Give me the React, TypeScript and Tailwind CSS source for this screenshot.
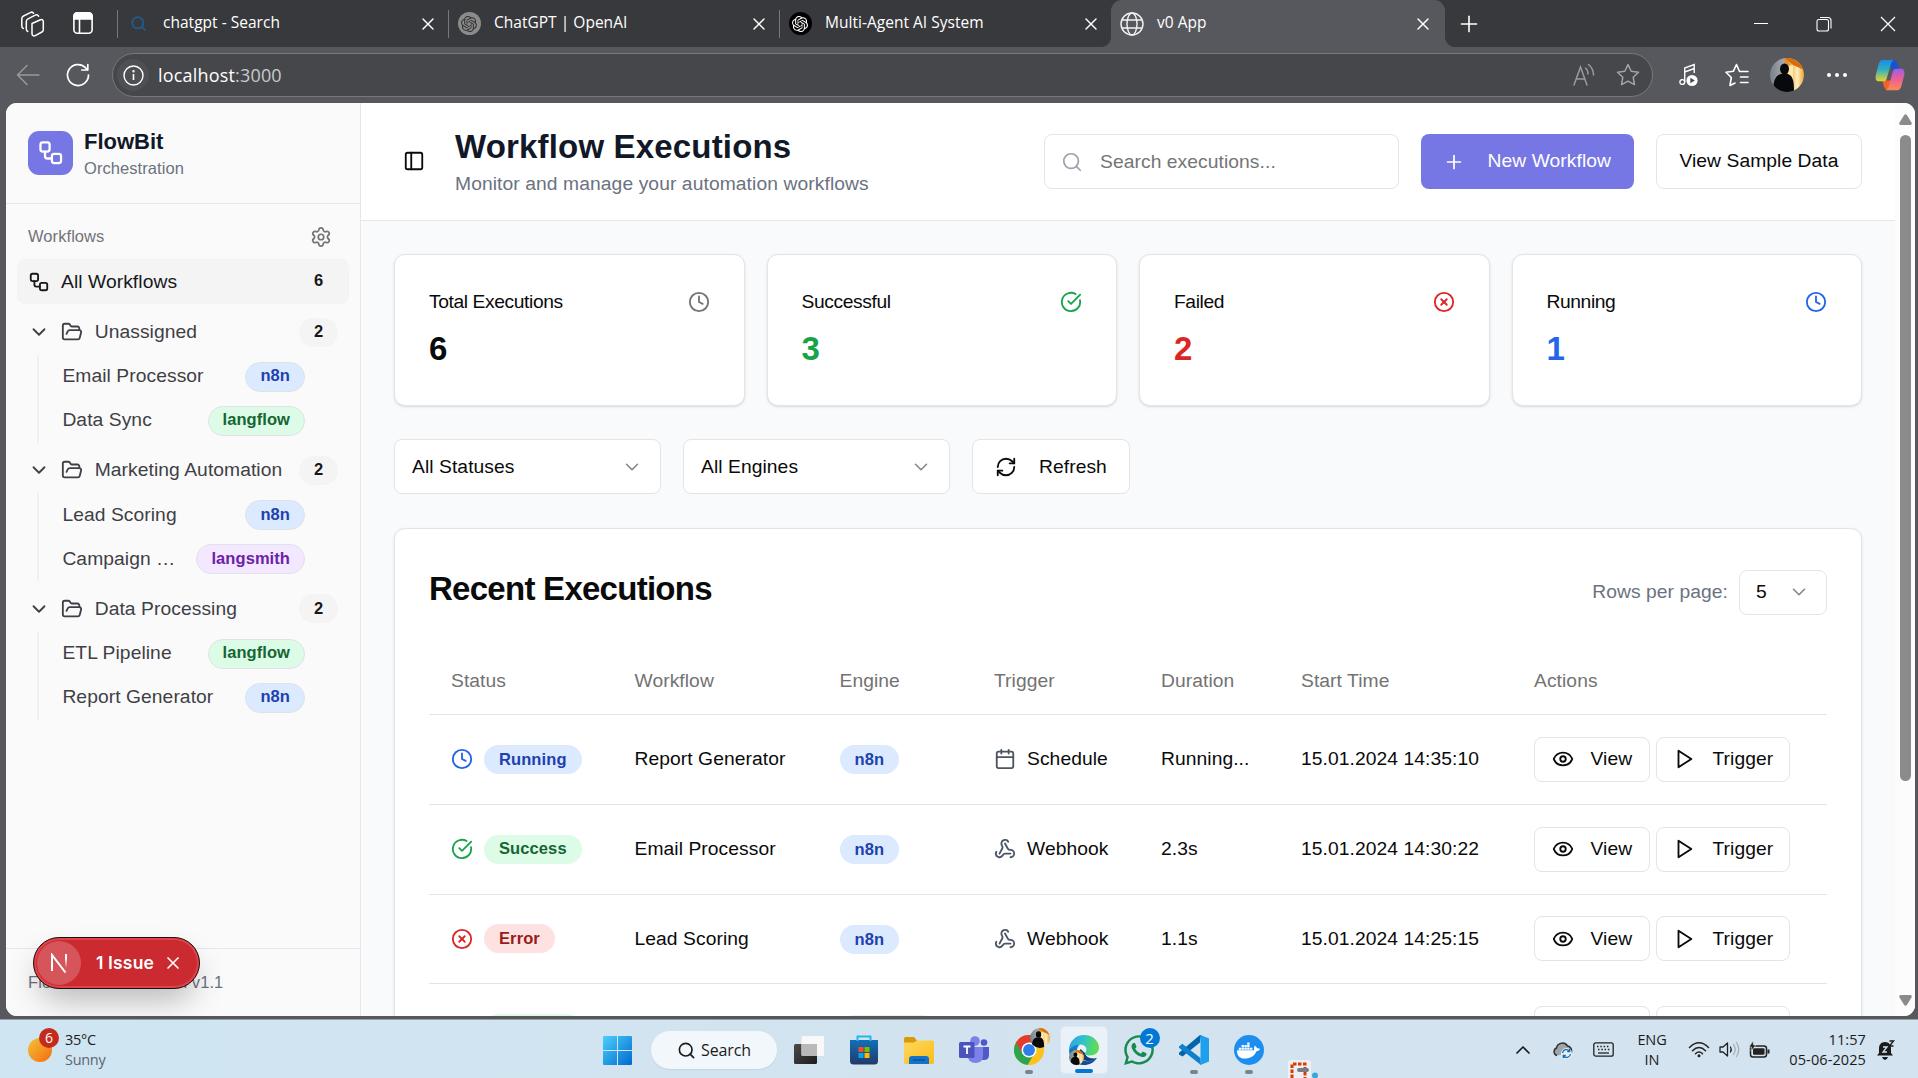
import React from "react";
import {
  Calendar, ChevronDown, ChevronUp, CircleCheckBig, CircleX, Clock, Eye, FolderOpen,
  PanelLeft, Plus, RefreshCw, Search, Settings, Webhook, Workflow, X,
} from "lucide-react";
import { SiOpenai } from "react-icons/si";
import { FaDocker, FaWhatsapp } from "react-icons/fa";

/* ---------- Browser chrome ---------- */

function Tab({ icon, label, active, divider }: { icon: React.ReactNode; label: string; active?: boolean; divider?: boolean }) {
  return (
    <div className={active ? "relative flex h-[47px] w-[334px] items-center rounded-t-[11px] bg-[#57585d] pl-[9px]" : "flex h-[47px] w-[331px] items-center pl-[8px]"}>
      {active && (
        <>
          <span className="absolute -left-[10px] bottom-0 h-[10px] w-[10px] bg-[radial-gradient(circle_at_0_0,#38393d_9.5px,#57585d_10.5px)]" />
          <span className="absolute -right-[10px] bottom-0 h-[10px] w-[10px] bg-[radial-gradient(circle_at_100%_0,#38393d_9.5px,#57585d_10.5px)]" />
        </>
      )}
      <span className="flex w-[24px] items-center justify-center">{icon}</span>
      <span className="whitespace-nowrap pb-[2px] pl-[13px] text-[15.500px] tracking-[0.02px] text-white">{label}</span>
      <X className={active ? "ml-auto mr-[12px] text-white" : "ml-auto mr-[10px] text-white"} size={20} strokeWidth={1.7} />
      {divider && <span className="h-[28px] w-px bg-[#77787c]" />}
    </div>
  );
}

function TitleBar() {
  return (
    <div className="flex h-[47px] items-center bg-[#38393d] font-['Open_Sans','Noto_Sans',sans-serif]">
      <div className="flex w-[117px] items-center pl-[20px]">
        <svg width="26" height="28" viewBox="0 0 26 28" fill="none" stroke="#fff" strokeWidth="1.5" strokeLinejoin="round" strokeLinecap="round">
          <path d="M12 13.500l8.500-3.700c1.500-.6 2.800.2 2.800 1.800v8.200c0 1-.5 1.700-1.400 2.200l-6.600 3.600c-1.700.9-3.300 0-3.300-1.800z" />
          <path d="M7.800 21.500c-.9-.4-1.500-1.200-1.500-2.400v-7.600c0-1.200.6-2.100 1.700-2.700l7.200-3.600c1.500-.8 3-.2 3.400 1" />
          <path d="M3.300 18.500c-.9-.4-1.500-1.200-1.500-2.400V8.700c0-1.200.6-2.100 1.700-2.700l6.800-3.400c1.300-.7 2.700-.3 3.300.7" />
        </svg>
        <svg className="mb-[2px] ml-[27px]" width="20" height="24" viewBox="0 0 20 24" fill="none" stroke="#fff" strokeWidth="1.600">
          <rect x=".9" y="1.900" width="18.200" height="20.400" rx="3.500" />
          <path d="M1 8V5q0-3 3-3h12q3 0 3 3v3z" fill="#fff" />
          <path d="M6.500 8v14" />
        </svg>
      </div>
      <span className="h-[28px] w-px bg-[#77787c]" />
      <Tab divider icon={<Search size={17} color="#1f5c8f" strokeWidth={2.500} />} label="chatgpt - Search" />
      <Tab divider icon={<span className="flex h-[23px] w-[23px] items-center justify-center rounded-full bg-[#8b8b8b]"><SiOpenai size={16} color="#333" /></span>} label="ChatGPT | OpenAI" />
      <Tab icon={<span className="flex h-[23px] w-[23px] items-center justify-center rounded-full bg-black"><SiOpenai size={16} color="#fff" /></span>} label="Multi-Agent AI System" />
      <Tab active icon={<svg width="24" height="24" viewBox="0 0 24 24" fill="none" stroke="#f2f2f2" strokeWidth="1.400"><circle cx="12" cy="12" r="11" /><ellipse cx="12" cy="12" rx="5" ry="11" /><path d="M2 8h20M2 16h20" /></svg>} label="v0 App" />
      <Plus className="ml-[11px] text-white" size={26} strokeWidth={1.500} />
      <div className="ml-auto flex items-center text-white">
        <span className="mr-[48px] h-px w-[14px] bg-white" />
        <svg className="mr-[48px]" width="16" height="16" viewBox="0 0 16 16" fill="none" stroke="#fff" strokeWidth="1.100">
          <rect x="1" y="3.500" width="11.500" height="11.500" rx="2" />
          <path d="M4 1.500h8q3 0 3 3v8" />
        </svg>
        <svg className="mr-[22px]" width="16" height="16" viewBox="0 0 16 16" stroke="#fff" strokeWidth="1.200"><path d="M1 1l14 14M15 1L1 15" /></svg>
      </div>
    </div>
  );
}

function Avatar({ size }: { size: number }) {
  return (
    <svg width={size} height={size} viewBox="0 0 34 34" className="shrink-0">
      <defs>
        <clipPath id={"av" + size}><circle cx="17" cy="17" r="17" /></clipPath>
        <linearGradient id={"ag" + size}><stop offset="0" stopColor="#77818b" /><stop offset=".4" stopColor="#a7a9a8" /><stop offset=".5" stopColor="#e68a1c" /><stop offset=".8" stopColor="#fff0c0" /><stop offset="1" stopColor="#f0a030" /></linearGradient>
      </defs>
      <g clipPath={"url(#av" + size + ")"}>
        <rect width="34" height="34" fill={"url(#ag" + size + ")"} />
        <path d="M15 0h19v12L23 7z" fill="#d96d0c" />
        <path d="M18 8l5-1v18h-5z" fill="#ffe9a8" />
        <ellipse cx="14.500" cy="11" rx="4.500" ry="5.500" fill="#07090d" />
        <path d="M3 34c0-12 3-17 8-18h7c5 2 6 7 6 18z" fill="#07090d" />
      </g>
    </svg>
  );
}

function Toolbar() {
  return (
    <div className="flex h-[56px] items-center bg-[#57585d] font-['Open_Sans','Noto_Sans',sans-serif]">
      <svg className="ml-[16px]" width="24" height="22" viewBox="0 0 24 22" fill="none" stroke="#98999c" strokeWidth="1.500" strokeLinecap="round" strokeLinejoin="round"><path d="M23 11H1.500M11 1.500L1.500 11l9.500 9.500" /></svg>
      <svg className="ml-[26px]" width="24" height="24" viewBox="0 0 24 24" fill="none" stroke="#fff" strokeWidth="1.700" strokeLinecap="round" strokeLinejoin="round"><path d="M22.500 12A10.500 10.500 0 1 1 19.500 4.700L21.500 7M21.800 1.500V7h-6" /></svg>
      <div className="ml-[22px] flex h-[44px] w-[1541px] items-center rounded-full border border-[#77787c] bg-[#46474b] pl-[4px]">
        <span className="flex h-[32px] w-[32px] items-center justify-center rounded-full bg-[#4f5054]">
          <svg width="21" height="21" viewBox="0 0 21 21" fill="none" stroke="#fff" strokeWidth="1.400"><circle cx="10.500" cy="10.500" r="9.500" /><path d="M10.500 9v6" strokeWidth="1.600" /><circle cx="10.500" cy="6.300" r=".5" /></svg>
        </span>
        <span className="pl-[9px] text-[18px] tracking-[0.18px] text-white">localhost<span className="text-[#c9cacc]">:3000</span></span>
        <svg className="ml-auto" width="22" height="24" viewBox="0 0 22 24" fill="none" stroke="#9a9b9e" strokeWidth="1.500" strokeLinecap="round"><path d="M1 22L7.500 4 14 22M3.500 16h8" /><path d="M12.500 5q2.500 2 2.500 6M15.500 1.500q5 4 5 10.500" /></svg>
        <svg className="ml-[21px] mr-[12px]" width="24" height="24" viewBox="0 0 24 24" fill="none" stroke="#a3a4a7" strokeWidth="1.500" strokeLinejoin="round"><path d="M12 1.500l3.200 6.700 7.300 1-5.300 5.100 1.300 7.300-6.500-3.500-6.500 3.500 1.300-7.300L1.500 9.200l7.300-1z" /></svg>
      </div>
      <svg className="ml-[26px]" width="19" height="24" viewBox="0 0 19 24" fill="none" stroke="#fff" strokeWidth="1.400"><circle cx="3.300" cy="19" r="2.400" /><path d="M5.700 19V5l9.500-3.500V10M5.700 9l9.500-3.500" /><circle cx="13" cy="17.500" r="5.600" fill="#fff" stroke="none" /><path d="M11.300 14.700l4.500 2.800-4.500 2.800z" fill="#46474b" stroke="none" /></svg>
      <svg className="ml-[27px]" width="24" height="26" viewBox="0 0 24 26" fill="none" stroke="#fff" strokeWidth="1.600" strokeLinejoin="round" strokeLinecap="round"><path d="M14.500 9.500l-3-7-3.200 6.800-7.300 1 5.300 5.200-1.300 8 5-2.500M14.500 9.500H23M15.500 15H23M15.500 20.500H23" /></svg>
      <span className="ml-[21px]"><Avatar size={34} /></span>
      <span className="ml-[23px] flex gap-[4px]">
        <i className="h-[4px] w-[4px] rounded-full bg-white" /><i className="h-[4px] w-[4px] rounded-full bg-white" /><i className="h-[4px] w-[4px] rounded-full bg-white" />
      </span>
      <svg className="ml-[27px]" width="32" height="36" viewBox="0 0 32 31" preserveAspectRatio="none">
        <defs>
          <linearGradient id="c1" x1="0" y1="0" x2="0" y2="1"><stop offset="0" stopColor="#1a8bea" /><stop offset=".45" stopColor="#2fb0c0" /><stop offset="1" stopColor="#ecd32c" /></linearGradient>
          <linearGradient id="c2" x1="0" y1="0" x2="0" y2="1"><stop offset="0" stopColor="#9a5cf0" /><stop offset=".5" stopColor="#ef5f93" /><stop offset="1" stopColor="#f98c50" /></linearGradient>
        </defs>
        <g transform="translate(1 2.500) scale(.94 .84)">
          <path d="M14 0h6c2 0 3 1 4 4l2 6h-8z" fill="#1a51ce" />
          <path d="M8 22l5-1h6l-3 8c-1 2-2 2-4 1.500-2-.5-3-4-4-8.500z" fill="#f0612c" />
          <path d="M8.500 0H20c-2 1-3 3-4 7l-3.500 12C12 21 11 22 9 22H4c-3 0-4-3-3-7L4 4c.8-2.500 2-4 4.500-4z" fill="url(#c1)" />
          <path d="M23.500 31H11.500c2-1 3-3 4-7L19 12c.6-2 1.500-3 3.500-3H28c3 0 4 3 3 7l-3 11c-.8 2.500-2 4-4.500 4z" fill="url(#c2)" />
        </g>
      </svg>
    </div>
  );
}

/* ---------- Sidebar ---------- */

type Engine = "n8n" | "langflow" | "langsmith";
const engineTone: Record<Engine, string> = {
  n8n: "bg-[#dbeafe] text-[#1e40af]",
  langflow: "bg-[#dcfce7] text-[#166534]",
  langsmith: "bg-[#f3e8ff] text-[#6b21a8]",
};

const groups: { name: string; items: { name: string; engine: Engine }[] }[] = [
  { name: "Unassigned", items: [{ name: "Email Processor", engine: "n8n" }, { name: "Data Sync", engine: "langflow" }] },
  { name: "Marketing Automation", items: [{ name: "Lead Scoring", engine: "n8n" }, { name: "Campaign …", engine: "langsmith" }] },
  { name: "Data Processing", items: [{ name: "ETL Pipeline", engine: "langflow" }, { name: "Report Generator", engine: "n8n" }] },
];

function Count({ n }: { n: number }) {
  return <span className="ml-auto flex h-[29px] w-[39px] items-center justify-center rounded-full bg-[#f4f4f5] pb-[2px] text-[16.500px] font-bold text-[#171717]">{n}</span>;
}

function Sidebar() {
  return (
    <aside className="relative flex w-[355px] shrink-0 flex-col border-r border-[#e5e7eb] bg-[#fafafa]">
      <div className="flex h-[101px] shrink-0 items-center gap-[11px] border-b border-[#e5e7eb] pl-[22px]">
        <span className="flex h-[44px] w-[45px] items-center justify-center rounded-[11px] bg-[#7676e4] text-white"><Workflow size={27.500} /></span>
        <div>
          <div className="text-[22px] font-bold leading-[30px] text-[#111827]">FlowBit</div>
          <div className="text-[16.500px] leading-[22px] tracking-[0.07px] text-[#6b7280]">Orchestration</div>
        </div>
      </div>
      <div className="flex flex-1 flex-col pl-[11px] pr-[11px] pt-[10px] tracking-[0.07px]">
        <div className="flex h-[45px] items-center justify-between pl-[11px] pr-[17px] text-[16.500px] text-[#737378]">
          Workflows
          <Settings size={22} strokeWidth={1.900} />
        </div>
        <div className="mb-[6px] flex h-[45px] items-center rounded-[8px] bg-[#f4f4f5] pl-[11px] pr-[11px] text-[19.250px] text-[#18181b]">
          <Workflow size={22} className="mr-[11px]" />
          <span className="pt-px">All Workflows</span>
          <Count n={6} />
        </div>
        {groups.map((g) => (
          <div key={g.name} className="mb-[5.8px]">
            <div className="flex h-[44px] items-center pl-[11px] pr-[11px] text-[19.250px] text-[#3f3f46]">
              <ChevronDown size={22} className="mr-[11px]" />
              <FolderOpen size={22} className="mr-[11.7px]" />
              {g.name}
              <Count n={2} />
            </div>
            <div className="ml-[20px] mt-[0.7px] border-l-2 border-[#f0f0f1]">
              {g.items.map((it) => (
                <div key={it.name} className="flex h-[44px] items-center justify-between pl-[23.4px] pr-[44px] text-[19.250px] text-[#3f3f46]">
                  {it.name}
                  <span className={"flex h-[30px] items-center rounded-full border border-[#e0e2e6] px-[14px] pb-[2px] text-[16.500px] font-bold " + engineTone[it.engine]}>{it.engine}</span>
                </div>
              ))}
            </div>
          </div>
        ))}
      </div>
      <div className="h-[68px] shrink-0 border-t border-[#e5e7eb] pl-[22px] pt-[22px] text-[16.500px] leading-[22px] tracking-[0.07px] text-[#6b7280]">FlowBit Orchestration v1.1</div>
      <div className="absolute bottom-[27px] left-[27px] flex h-[52px] w-[167px] items-center rounded-full border border-[#1d1010] bg-[#ca2a30] pl-[3px] text-white shadow-[inset_0_0_0_2px_#e0444a,0_16px_32px_-6px_rgba(0,0,0,0.28)]">
        <span className="flex h-[44px] w-[44px] items-center justify-center rounded-full bg-[#d6555a]">
          <svg width="18" height="20" viewBox="0 0 18 20" fill="none" strokeWidth="2">
            <defs><linearGradient id="nx" x1="0" y1="0" x2="0" y2="1"><stop offset=".3" stopColor="#fff" /><stop offset="1" stopColor="#fff" stopOpacity="0" /></linearGradient></defs>
            <path d="M2 18V2l13.500 17.500" stroke="#fff" />
            <path d="M15 1h2v14h-2z" fill="url(#nx)" />
          </svg>
        </span>
        <span className="pl-[15px] font-['Inter'] text-[17.500px] font-semibold tracking-[0.15px]">1 Issue</span>
        <X size={20} strokeWidth={2} className="ml-[9px]" />
      </div>
    </aside>
  );
}

/* ---------- Main area ---------- */

const outline = "flex items-center rounded-[8px] border border-[#e4e4e7] bg-white text-[19.250px] text-[#0a0a0a] ";

function Header() {
  return (
    <header className="flex h-[118px] shrink-0 items-center border-b border-[#e5e7eb] bg-white">
      <PanelLeft size={22} className="mb-px ml-[42px] text-[#0a0a0a]" />
      <div className="ml-[30px]">
        <h1 className="text-[33px] font-bold leading-[44px] tracking-[0.17px] text-[#111827]">Workflow Executions</h1>
        <p className="text-[19.250px] leading-[29px] tracking-[0.09px] text-[#6b7280]">Monitor and manage your automation workflows</p>
      </div>
      <div className="ml-auto mr-[33px] flex gap-[22px]">
        <div className={outline + "w-[355px] pl-[16px]"}>
          <Search size={22} strokeWidth={1.900} className="mr-[17px] text-[#9ca3af]" />
          <span className="pt-px tracking-[0.07px] text-[#757575]">Search executions...</span>
        </div>
        <div className="flex h-[55px] w-[213px] items-center rounded-[8px] bg-[#7676e4] pl-[22px] text-[19.250px] tracking-[0.07px] text-white">
          <Plus size={22} strokeWidth={1.900} className="mr-[22.5px]" />New Workflow
        </div>
        <div className={outline + "w-[206px] justify-center tracking-[0.07px]"}>View Sample Data</div>
      </div>
    </header>
  );
}

const stats = [
  { label: "Total Executions", value: 6, tone: "text-[#0a0a0a]", iconTone: "text-[#737373]", Icon: Clock },
  { label: "Successful", value: 3, tone: "text-[#16a34a]", iconTone: "text-[#16a34a]", Icon: CircleCheckBig },
  { label: "Failed", value: 2, tone: "text-[#dc2626]", iconTone: "text-[#dc2626]", Icon: CircleX },
  { label: "Running", value: 1, tone: "text-[#2563eb]", iconTone: "text-[#2563eb]", Icon: Clock },
];

const rows: { status: "Running" | "Success" | "Error"; workflow: string; engine: Engine; trigger: string; duration: string; start: string }[] = [
  { status: "Running", workflow: "Report Generator", engine: "n8n", trigger: "Schedule", duration: "Running...", start: "15.01.2024 14:35:10" },
  { status: "Success", workflow: "Email Processor", engine: "n8n", trigger: "Webhook", duration: "2.3s", start: "15.01.2024 14:30:22" },
  { status: "Error", workflow: "Lead Scoring", engine: "n8n", trigger: "Webhook", duration: "1.1s", start: "15.01.2024 14:25:15" },
  { status: "Success", workflow: "", engine: "langflow", trigger: "", duration: "", start: "" },
];

const statusTone = {
  Running: { badge: "bg-[#dbeafe] text-[#1e40af]", icon: "text-[#2563eb]", Icon: Clock },
  Success: { badge: "bg-[#dcfce7] text-[#166534]", icon: "text-[#16a34a]", Icon: CircleCheckBig },
  Error: { badge: "bg-[#fee2e2] text-[#991b1b]", icon: "text-[#dc2626]", Icon: CircleX },
};

const cols = "grid grid-cols-[183.500px_205px_154.500px_167px_140px_233px_315px] items-center pl-[22px] ";
const badge = "flex h-[29px] items-center rounded-full px-[15px] pb-[1px] text-[16.500px] font-bold tracking-[0.1px] ";

function Executions() {
  return (
    <section className="h-[560px] shrink-0 rounded-[11px] border border-[#e4e4e7] bg-white px-[34px] text-[19.250px] tracking-[0.07px] text-[#0a0a0a] shadow-sm">
      <div className="flex h-[118px] items-center justify-between pt-[8px]">
        <h2 className="pb-[7px] text-[33px] font-bold tracking-[-0.73px]">Recent Executions</h2>
        <div className="flex items-center gap-[11px] text-[#6b7280]">
          <span className="pt-px">Rows per page:</span>
          <div className={outline + "h-[45px] w-[88px] justify-between pl-[16px] pr-[16px]"}><span className="pt-px">5</span><ChevronDown size={22} strokeWidth={1.700} className="text-[#858585]" /></div>
        </div>
      </div>
      <div className={cols + "h-[68px] border-b border-[#e4e4e7] pt-px text-[#737373]"}>
        <span>Status</span><span>Workflow</span><span>Engine</span><span>Trigger</span><span>Duration</span><span>Start Time</span><span>Actions</span>
      </div>
      {rows.map((r, i) => {
        const s = statusTone[r.status];
        return (
          <div key={i} className={cols + "h-[89.8px] border-b border-[#e4e4e7]"}>
            <span className="flex items-center gap-[11px]">
              <s.Icon size={22} className={s.icon} />
              <span className={badge + s.badge}>{r.status}</span>
            </span>
            <span className="pt-px">{r.workflow}</span>
            <span className="flex pt-px"><span className={badge + engineTone[r.engine]}>{r.engine}</span></span>
            <span className="flex items-center gap-[11px]">
              {r.trigger === "Schedule" ? <Calendar size={22} className="text-[#4b5563]" /> : <Webhook size={22} className="text-[#4b5563]" />}
              <span className="pt-px">{r.trigger}</span>
            </span>
            <span className="pt-px">{r.duration}</span>
            <span className="pt-px">{r.start}</span>
            <span className="flex gap-[6px]">
              <span className={outline + "h-[45px] w-[116px] pl-[17px]"}><Eye size={22} className="mr-[16.5px]" />View</span>
              <span className={outline + "h-[45px] w-[134px] pl-[16px]"}>
                <svg width="22" height="22" viewBox="0 0 24 24" fill="none" stroke="currentColor" strokeWidth="2" strokeLinecap="round" strokeLinejoin="round" className="mr-[17.5px]"><polygon points="6 3 20 12 6 21 6 3" /></svg>
                Trigger
              </span>
            </span>
          </div>
        );
      })}
    </section>
  );
}

function Main() {
  return (
    <main className="flex min-w-0 flex-1 flex-col bg-[#f9fafb]">
      <Header />
      <div className="flex flex-col px-[33px] pt-[33px]">
        <div className="grid shrink-0 grid-cols-4 gap-[22px]">
          {stats.map(({ label, value, tone, iconTone, Icon }) => (
            <div key={label} className="h-[152px] rounded-[11px] border border-[#e4e4e7] bg-white px-[34px] pt-[33px] shadow-sm">
              <div className="flex h-[27px] items-center justify-between text-[19.250px] tracking-[-0.4px] text-[#0a0a0a]">
                <span className="pt-px">{label}</span><Icon size={22} className={iconTone} />
              </div>
              <div className={"mt-[12px] text-[33px] font-bold leading-[44px] " + tone}>{value}</div>
            </div>
          ))}
        </div>
        <div className="mb-[34px] mt-[33px] flex h-[55px] shrink-0 gap-[22px] tracking-[0.07px]">
          <div className={outline + "w-[267px] justify-between pl-[17px] pr-[17px]"}><span className="pt-[2px]">All Statuses</span><ChevronDown size={22} strokeWidth={1.700} className="text-[#858585]" /></div>
          <div className={outline + "w-[267px] justify-between pl-[17px] pr-[17px]"}><span className="pt-[2px]">All Engines</span><ChevronDown size={22} strokeWidth={1.700} className="text-[#858585]" /></div>
          <div className={outline + "w-[158px] pl-[22px]"}><RefreshCw size={22} className="mr-[22px]" /><span className="pt-[2px]">Refresh</span></div>
        </div>
        <Executions />
      </div>
    </main>
  );
}

/* ---------- Taskbar ---------- */

function AppCell({ children, dot, active }: { children?: React.ReactNode; dot?: boolean; active?: boolean }) {
  return (
    <div className="flex w-[55px] justify-center">
      <div className={active ? "relative flex h-[48px] w-[48px] items-center justify-center rounded-[5px] border border-[#dfe6ee] bg-[#eaf1f8]" : "relative flex h-[48px] w-[48px] items-center justify-center"}>
        {children}
        {dot && <span className="absolute bottom-0 h-[4px] w-[8px] rounded-full bg-[#7c848b]" />}
        {active && <span className="absolute bottom-0 h-[4px] w-[18px] rounded-full bg-[#0078d4]" />}
      </div>
    </div>
  );
}

function Taskbar() {
  return (
    <div className="flex h-[58px] items-center overflow-hidden bg-linear-to-r from-[#cfe5f2] from-0% via-[#d3e3ef] via-60% to-[#d3e3ef] pt-[2px] font-['Open_Sans','Noto_Sans',sans-serif] text-[#1b1b1b]">
      <div className="flex w-[590px] items-center pl-[28px]">
        <div className="relative mb-[9px] h-[34px] w-[31px]">
          <span className="absolute bottom-[1px] left-0 h-[24px] w-[24px] rounded-full bg-linear-to-br from-[#eec435] to-[#f4660c]" />
          <span className="absolute -top-px left-[11px] flex h-[20px] w-[20px] items-center justify-center rounded-full bg-[#c42b1c] text-[14px] text-white">6</span>
        </div>
        <div className="ml-[6px] pb-px text-[14.500px] leading-[20px] tracking-[-0.3px]">
          <div>35°C</div>
          <div className="text-[#5d666d]">Sunny</div>
        </div>
      </div>
      <AppCell>
        <svg width="29" height="29" viewBox="0 0 29 29"><defs><linearGradient id="w" x1="0" y1="0" x2="1" y2="1"><stop offset="0" stopColor="#4cd0fb" /><stop offset="1" stopColor="#0069cf" /></linearGradient></defs><path fill="url(#w)" d="M1 0h13v14H0V1q0-1 1-1zM15 0h13q1 0 1 1v13H15zM0 15h14v14H1q-1 0-1-1zM15 15h14v13q0 1-1 1H15z" /></svg>
      </AppCell>
      <div className="ml-[6px] mr-[4px] flex h-[38px] w-[126px] items-center rounded-full bg-[#f2f7fc] pl-[26px] text-[16px] tracking-[-0.1px] shadow-[0_1px_1px_#c4d3df]">
        <Search size={19} strokeWidth={2.100} className="mr-[5px]" />Search
      </div>
      <AppCell>
        <svg width="30" height="29" viewBox="0 0 30 29"><defs><linearGradient id="tv" x1="0" y1="0" x2="1" y2="1"><stop offset="0" stopColor="#4a4a4a" /><stop offset="1" stopColor="#1d1d1d" /></linearGradient></defs><rect y="8" width="23" height="20" rx="1.500" fill="url(#tv)" /><rect x="7.500" y="0" width="22.500" height="20" rx="1.500" fill="#f8f8f8" /><path d="M7.500 8H23v12H9q-1.500 0-1.500-1.500z" fill="#b9b9b9" /></svg>
      </AppCell>
      <AppCell>
        <svg width="30" height="30" viewBox="0 0 30 30"><defs><linearGradient id="st" x1="0" y1="0" x2="0" y2="1"><stop offset="0" stopColor="#116fb9" /><stop offset="1" stopColor="#223a68" /></linearGradient></defs><path d="M1 5h28v21q0 3.500-3.500 3.500h-21Q1 29.500 1 26z" fill="url(#st)" /><path d="M8.500 6V1.500h13V6" fill="none" stroke="#22b5ef" strokeWidth="2" /><path d="M9.500 12h5v5h-5z" fill="#f25022" /><path d="M15.500 12h5v5h-5z" fill="#7fba00" /><path d="M9.500 18h5v5h-5z" fill="#00a4ef" /><path d="M15.500 18h5v5h-5z" fill="#ffb900" /></svg>
      </AppCell>
      <AppCell>
        <svg width="30" height="27" viewBox="0 0 30 27"><defs><linearGradient id="fo" x1="0" y1="0" x2="1" y2="1"><stop offset="0" stopColor="#ffd75e" /><stop offset="1" stopColor="#fabd18" /></linearGradient></defs><path d="M0 1.500Q0 0 1.500 0H10l3 3.500V8H0z" fill="#d99a08" /><path d="M0 5.500h10l3-2h15.500q1.500 0 1.500 1.500v20.500q0 1.500-1.500 1.500h-27Q0 27 0 25.500z" fill="url(#fo)" /><path d="M5 27v-5q0-3 3-3h14q3 0 3 3v5z" fill="#1473c8" /><path d="M9 23h12" stroke="#0b4a8a" strokeWidth="1.200" /></svg>
      </AppCell>
      <AppCell>
        <svg width="30" height="28" viewBox="0 0 30 28"><circle cx="25" cy="6.500" r="3.300" fill="#5059c9" /><path d="M20 11h10v8q0 5-5 5h-5z" fill="#5059c9" /><circle cx="16" cy="5" r="4.800" fill="#7b83eb" /><path d="M9 11h15v9q0 7-7.500 7Q9 27 9 20z" fill="#7b83eb" /><rect y="6" width="15.500" height="16" rx="1.500" fill="#4b53bc" /><path d="M4.500 10.500h7M8 10.500V18" stroke="#fff" strokeWidth="1.800" /></svg>
      </AppCell>
      <AppCell dot>
        <svg width="30" height="30" viewBox="0 0 48 48"><circle cx="24" cy="24" r="24" fill="#fbbc05" /><path d="M24 24L3.200 12A24 24 0 0 0 22 48l10-18z" fill="#2da44e" /><path d="M24 13h20.800A24 24 0 0 1 22 48l12-19z" fill="#fcc31e" /><path d="M3.200 12A24 24 0 0 1 44.800 12H24L12 27z" fill="#e33b2e" /><circle cx="24" cy="24" r="12" fill="#fff" /><circle cx="24" cy="24" r="9.500" fill="#2f7de9" /></svg>
        <span className="absolute right-[3px] top-[2px]"><Avatar size={20} /></span>
      </AppCell>
      <AppCell active>
        <svg width="30" height="30" viewBox="0 0 30 30">
          <defs>
            <linearGradient id="e1" x1="0" y1="0" x2="1" y2=".2"><stop offset="0" stopColor="#2a9fe6" /><stop offset=".5" stopColor="#30c2cb" /><stop offset="1" stopColor="#5fdc54" /></linearGradient>
            <linearGradient id="e2" x1="0" y1="0" x2="0" y2="1"><stop offset="0" stopColor="#1787d8" /><stop offset="1" stopColor="#114a8b" /></linearGradient>
          </defs>
          <path d="M0 15C.3 6 7 0 15 0c9 0 15 6.500 15 12.500 0 5-4 8-9 8-4 0-5.500-1.500-4.500-3 2.500-4-.5-8-5-8C6 9.500 2 12 0 15z" fill="url(#e1)" />
          <path d="M0 15c2-3.500 6-5.500 11-5.500C6 13 7 22 13 25c5 2.300 10 .8 15-2-3 4.500-7.500 7-13 7C6.500 30 0 23 0 15z" fill="url(#e2)" />
          <path d="M11.500 14c-4 5 0 11.500 7 12 4 .2 7.500-1.500 9.500-3-4 1-11 .5-12-5z" fill="#123f7a" />
        </svg>
        <span className="absolute bottom-[8px] left-[8px]"><Avatar size={15} /></span>
      </AppCell>
      <AppCell>
        <FaWhatsapp size={34} color="#178a4d" />
        <span className="absolute right-[3px] top-[2px] flex h-[20px] w-[20px] items-center justify-center rounded-full bg-[#0078d4] text-[15px] text-white">2</span>
      </AppCell>
      <AppCell dot>
        <svg width="30" height="30" viewBox="0 0 30 30"><path d="M22 0l-1 7.500L3.500 21.500 0 19.500v-1.800L21 0z" fill="#0065a9" /><path d="M0 11.500L3.300 8.800 21.500 23 22 30 0 12.800z" fill="#0f80cc" /><path d="M21.500 0L30 3.500v23L21.500 30z" fill="#1fa0ec" /></svg>
      </AppCell>
      <AppCell dot>
        <span className="flex h-[30px] w-[30px] items-center justify-center rounded-full bg-[#1d8df0]"><FaDocker size={23} color="#fff" /></span>
      </AppCell>
      <div className="ml-[12px] mt-[38px]">
        <svg width="32" height="18" viewBox="0 0 32 18"><path d="M0 18V3q0-3 3-3h17q3 0 3 3v15z" fill="#edf1f3" /><path d="M4 18V4h13v14" fill="none" stroke="#d83b01" strokeWidth="3" strokeDasharray="3.500 1.500" /><rect x="9" y="8" width="12" height="4" rx="2" fill="#777d82" /><circle cx="27" cy="15.500" r="3" fill="#3aa6e0" /></svg>
      </div>
      <div className="ml-auto flex items-center pb-px">
        <ChevronUp size={24} strokeWidth={1.700} className="mr-[17px]" />
        <svg width="21" height="18" viewBox="0 0 21 18"><path d="M5 14.500A4 4 0 0 1 4.500 7 6 6 0 0 1 15.500 5 4.500 4.500 0 0 1 19.500 10v2" fill="#a2a5a8" stroke="#333" strokeWidth="1.500" /><circle cx="14.500" cy="12.500" r="5.500" fill="#e8f1f8" /><path d="M10.500 12a4 4 0 0 1 7-2M18.500 13a4 4 0 0 1-7 2M17.700 8v2.500h-2.500M11.300 17v-2.500h2.500" fill="none" stroke="#0f6cbd" strokeWidth="1.300" /></svg>
        <svg className="ml-[20px]" width="21" height="15" viewBox="0 0 21 15" fill="none" stroke="#222" strokeWidth="1.300"><rect x=".8" y=".8" width="19.400" height="13.400" rx="2" /><path d="M4 4.500h13M5 7.500h12" strokeDasharray="1.500 1.800" /><path d="M5 11h11" /></svg>
        <div className="ml-[22px] w-[32px] text-center text-[14.500px] leading-[20px] tracking-[-0.1px]"><div>ENG</div><div>IN</div></div>
        <svg className="ml-[20px]" width="22" height="17" viewBox="0 0 22 17" fill="none" stroke="#222" strokeWidth="1.500" strokeLinecap="round"><path d="M1.500 6.500q9.500-9.500 19 0M4.500 9.800q6.500-6.500 13 0M7.500 12.800q3.500-3.500 7 0" /><circle cx="11" cy="14.700" r="1.500" fill="#222" stroke="none" /></svg>
        <svg className="ml-[9px]" width="21" height="17" viewBox="0 0 21 17" fill="none" stroke="#222" strokeWidth="1.300" strokeLinejoin="round" strokeLinecap="round"><path d="M1 6v5h3l4.500 4V2L4 6z" /><path d="M11.500 6q1.500 2.500 0 5" /><path d="M14.500 3.500q3.500 5 0 10M17.500 1.500q4.500 7 0 14" stroke="#a4afb7" /></svg>
        <svg className="ml-[9px]" width="21" height="18" viewBox="0 0 21 18"><rect x="1.500" y="5" width="16" height="11" rx="2.500" fill="none" stroke="#222" strokeWidth="1.500" /><rect x="4" y="7.300" width="11.500" height="6.500" rx="1" fill="#222" /><path d="M18.500 8.500h2v4h-2z" fill="#222" /><path d="M4 0L0 6h2.500L2 10l5-6H4.500z" fill="#222" stroke="#d5e4ef" strokeWidth=".6" /></svg>
        <div className="ml-[15px] w-[81px] whitespace-nowrap text-right text-[14.500px] leading-[20px] tracking-[0.1px]"><div>11:57</div><div>05-06-2025</div></div>
        <svg className="ml-[11px] mr-[23px]" width="18" height="20" viewBox="0 0 18 20"><path d="M8 2c-4 0-6 3-6 6v5l-2 2.500h16L14 13V8c0-3-2-6-6-6zM5 17h6q-1 3-3 3t-3-3z" fill="#1b1b1b" /><path d="M6 7h4l-4 5h4" fill="none" stroke="#d5e4ef" strokeWidth="1.300" /><path d="M12.500 1h4l-4 5h4" fill="none" stroke="#1b1b1b" strokeWidth="1.400" /></svg>
      </div>
    </div>
  );
}

export default function App() {
  return (
    <div className="flex h-[1078px] w-[1918px] flex-col overflow-hidden bg-[#57585d] font-['Liberation_Sans',Arial,sans-serif]">
      <TitleBar />
      <Toolbar />
      <div className="ml-[6px] mr-[3px] flex h-[913px] overflow-hidden rounded-[11px] bg-[#f9fafb]">
        <Sidebar />
        <Main />
        <div className="flex w-[20px] shrink-0 flex-col items-center bg-[#fcfcfc]">
          <svg className="mt-[11px]" width="13" height="11" viewBox="0 0 13 11"><path d="M5.200 1q1.300-1.500 2.600 0L12.500 8.500q.8 2-1 2.500h-10q-1.800-.5-1-2.500z" fill="#8b8b8b" /></svg>
          <div className="mt-[10px] h-[646px] w-[11px] rounded-full bg-[#8b8b8b]" />
          <svg className="mb-[10px] mt-auto rotate-180" width="13" height="11" viewBox="0 0 13 11"><path d="M5.200 1q1.300-1.500 2.600 0L12.500 8.500q.8 2-1 2.500h-10q-1.800-.5-1-2.500z" fill="#8b8b8b" /></svg>
        </div>
      </div>
      <div className="h-[4px] border-b border-[#9a9da3] bg-[#57585d]" />
      <Taskbar />
    </div>
  );
}
